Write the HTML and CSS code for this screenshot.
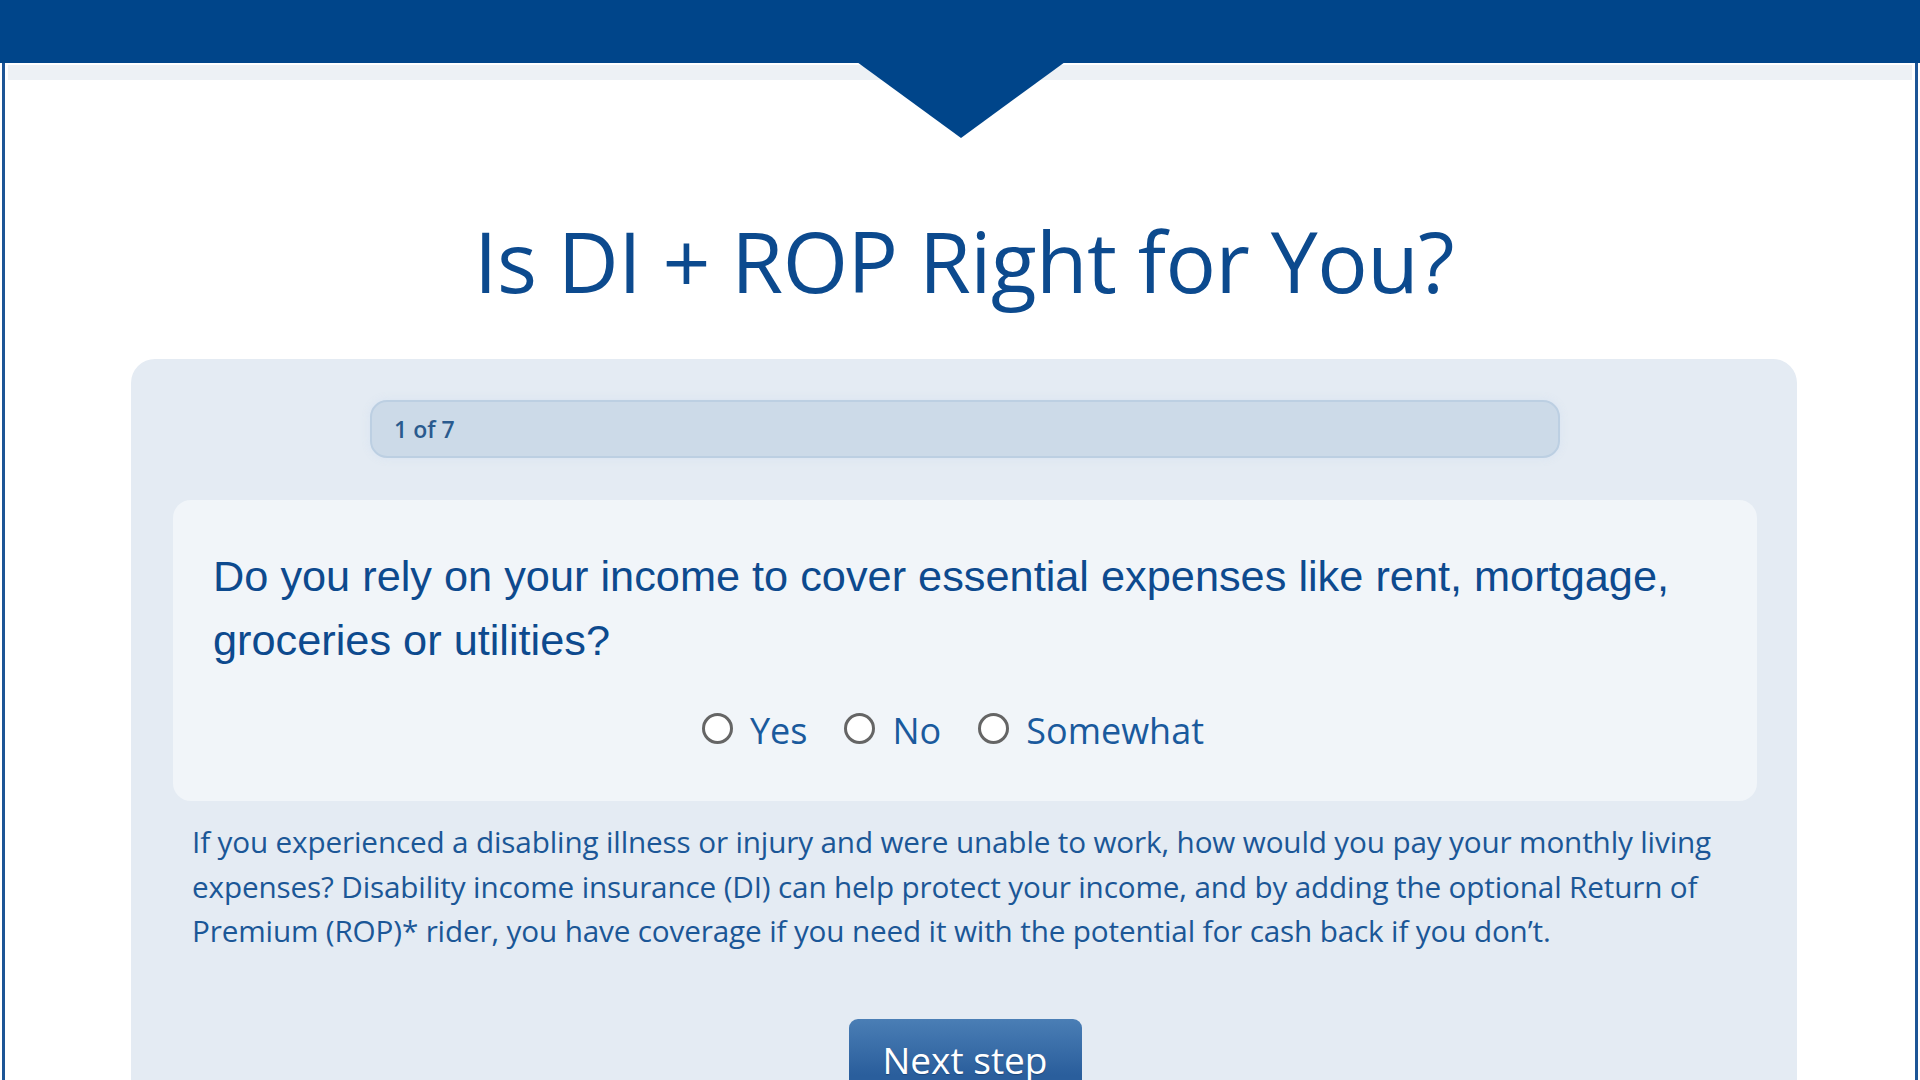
FILE: index.html
```html
<!DOCTYPE html>
<html lang="en">
<head>
<meta charset="utf-8">
<title>Is DI + ROP Right for You?</title>
<link rel="stylesheet" href="styles.css">
</head>
<body>
<header class="band"></header>
<div class="notch"></div>
<main class="panel">
  <div class="strip"></div>
  <h1 class="title">Is DI + ROP Right for You?</h1>
  <section class="card">
    <div class="progress">1 of 7</div>
    <div class="question">
      <p class="q-text">Do you rely on your income to cover essential expenses like rent, mortgage, groceries or utilities?</p>
      <div class="options">
        <label class="opt"><input type="radio" name="q1" class="radio"><span>Yes</span></label>
        <label class="opt"><input type="radio" name="q1" class="radio"><span>No</span></label>
        <label class="opt"><input type="radio" name="q1" class="radio"><span>Somewhat</span></label>
      </div>
    </div>
    <p class="desc">If you experienced a disabling illness or injury and were unable to work, how would you pay your monthly living expenses? Disability income insurance (DI) can help protect your income, and by adding the optional Return of Premium (ROP)* rider, you have coverage if you need it with the potential for cash back if you don’t.</p>
    <div class="actions"><button class="next" type="button">Next step</button></div>
  </section>
</main>
</body>
</html>
```

FILE: styles.css
```css
html, body {
  margin: 0;
  padding: 0;
  background: #ffffff;
  overflow: hidden;
  height: 1080px;
}
body {
  font-family: "Open Sans", "Liberation Sans", sans-serif;
  position: relative;
}
.band {
  height: 63px;
  background: #00458a;
}
.notch {
  position: absolute;
  left: 857px;
  top: 62px;
  width: 0;
  height: 0;
  border-left: 104px solid transparent;
  border-right: 104px solid transparent;
  border-top: 76px solid #00458a;
  z-index: 2;
}
.panel {
  margin: 0 2px 0 2px;
  border-left: 3px solid #1d5596;
  border-right: 3px solid #1d5596;
  height: 1017px;
  overflow: hidden;
}
.strip {
  margin: 2px 3px 0 3px;
  height: 15px;
  background: #edf1f5;
}
.title {
  margin: 131px 0 0 0;
  padding-left: 8px;
  text-align: center;
  font-weight: 400;
  font-size: 84px;
  line-height: 100px;
  color: #0c4a8e;
  letter-spacing: -0.5px;
}
.card {
  margin: 48px 0 0 126px;
  width: 1666px;
  box-sizing: border-box;
  background: #e4ebf3;
  border-radius: 24px 24px 0 0;
  padding: 41px 40px 40px 42px;
  height: 800px;
}
.progress {
  margin: 0 auto;
  width: 1190px;
  height: 58px;
  box-sizing: border-box;
  border: 2px solid #bccfe2;
  border-radius: 17px;
  background: #ccdae8;
  box-shadow: 0 0 6px 2px rgba(220, 230, 242, 0.9);
  padding-left: 22px;
  display: flex;
  align-items: center;
  font-size: 23px;
  font-weight: 600;
  color: #2a5a8e;
}
.question {
  margin-top: 42px;
  background: #f1f5f9;
  border-radius: 18px;
  padding: 44px 40px 45px 40px;
}
.q-text {
  margin: 0;
  font-family: "Liberation Sans", Arial, sans-serif;
  font-size: 43.3px;
  line-height: 64px;
  color: #0d4a8e;
}
.options {
  margin-top: 34px;
  display: flex;
  justify-content: center;
  gap: 37px;
  padding-right: 24px;
  height: 50px;
}
.opt {
  display: flex;
  align-items: center;
  gap: 17px;
  font-size: 36px;
  line-height: 50px;
  color: #1a5a9d;
}
.radio {
  appearance: none;
  -webkit-appearance: none;
  margin: -6px 0 0 0;
  width: 31px;
  height: 31px;
  border: 3px solid #656565;
  border-radius: 50%;
  background: #ffffff;
  box-sizing: border-box;
}
.desc {
  margin: 19px 19px 0 19px;
  font-size: 29.7px;
  line-height: 44.5px;
  color: #1b5797;
  letter-spacing: -0.15px;
}
.actions {
  margin-top: 65px;
  display: flex;
  justify-content: center;
}
.next {
  width: 233px;
  height: 80px;
  border: none;
  border-radius: 9px 9px 0 0;
  background: linear-gradient(#4a7eb5, #2a5e9c 70%);
  color: #ffffff;
  font-family: "Open Sans", sans-serif;
  font-size: 37px;
  line-height: 50px;
  padding: 16px 0 14px 0;
  display: block;
  text-align: center;
  align-self: flex-start;
  text-shadow: 0 1px 1px rgba(0, 30, 70, 0.4);
}
```
